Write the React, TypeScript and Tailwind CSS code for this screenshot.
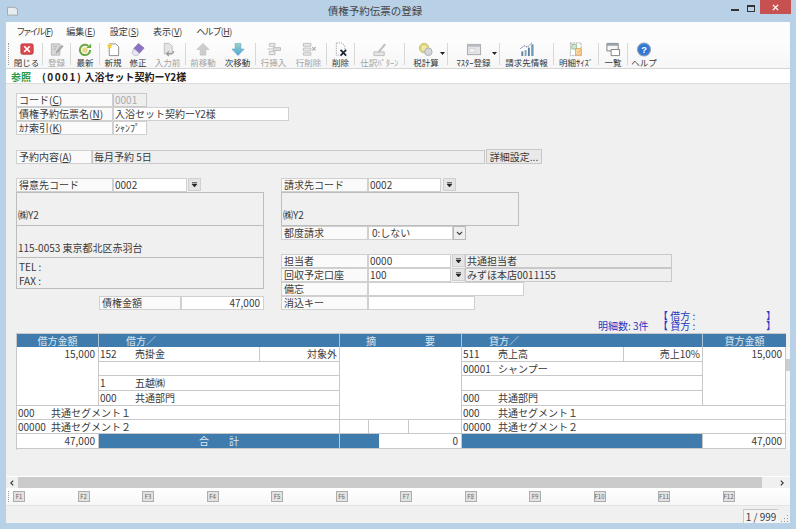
import type { ReactNode } from 'react';

const Svg = ({ children }: { children: ReactNode }) => (
  <svg viewBox="0 0 16 16" className="w-[16px] h-[15px] shrink-0">
    {children}
  </svg>
);

const icons: Record<string, ReactNode> = {
  close: (
    <Svg>
      <rect x="1.5" y="2" width="13" height="11" rx="1.5" fill="#e0484f" stroke="#b93a40" />
      <path d="M5 4.5l6 6M11 4.5l-6 6" stroke="#fff" strokeWidth="1.7" />
    </Svg>
  ),
  save: (
    <Svg>
      <path d="M2 2h9v12H2z" fill="#d8d8d8" stroke="#b5b5b5" />
      <path d="M7 10l6-7 2 1.500-6 7-2.500 1z" fill="#a9a9a9" />
      <path d="M4 5h4M4 7.500h3" stroke="#b0b0b0" />
    </Svg>
  ),
  refresh: (
    <Svg>
      <circle cx="8" cy="8.500" r="3" fill="#e8d98a" />
      <path d="M13.500 8.500a5.500 5.500 0 1 1-2-4.300" fill="none" stroke="#6fa843" strokeWidth="2.200" />
      <path d="M14.500 1.500v5h-5z" fill="#6fa843" />
    </Svg>
  ),
  newDoc: (
    <Svg>
      <path d="M4 2h7l3 3v9.500H4z" fill="#fff" stroke="#8a8a8a" />
      <path d="M4.500 0.500l1 2.300 2.400.3-1.800 1.600.5 2.400-2.100-1.200-2.100 1.200.5-2.400L1 3.100l2.400-.3z" fill="#f4cf3e" />
    </Svg>
  ),
  eraser: (
    <Svg>
      <path d="M8.500 1.500l6 5-5 5.500-6-5z" fill="#8a72c4" stroke="#6d589f" strokeWidth=".6" />
      <path d="M3.500 7l6 5-2 2.500H4L1.500 12z" fill="#e8e4f0" stroke="#a8a0bd" strokeWidth=".6" />
    </Svg>
  ),
  before: (
    <Svg>
      <path d="M4 1.500h5.500l3 3v8H4z" fill="#e4e4e4" stroke="#bdbdbd" />
      <path d="M14 9.500a3 3 0 0 1-3 3H7M9 10l-2.500 2.500L9 15" fill="none" stroke="#9c9c9c" strokeWidth="1.500" />
    </Svg>
  ),
  up: (
    <Svg>
      <path d="M8 1.500l6.500 6.500H11v6H5V8H1.500z" fill="#cdcdcd" stroke="#bbbbbb" strokeWidth=".6" />
    </Svg>
  ),
  down: (
    <Svg>
      <defs>
        <linearGradient id="dn" x1="0" y1="0" x2="0" y2="1">
          <stop offset="0" stopColor="#9bd3c4" />
          <stop offset="1" stopColor="#4aa3e0" />
        </linearGradient>
      </defs>
      <path d="M5 1.500h6v6h3.500L8 14.500 1.500 7.500H5z" fill="url(#dn)" stroke="#5f9fc0" strokeWidth=".6" />
    </Svg>
  ),
  rowIns: (
    <Svg>
      <path d="M3 1.500h6v3H3zM3 10h6v3.500H3z" fill="#ececec" stroke="#bcbcbc" />
      <path d="M7 6h8v3H7z" fill="#dedede" stroke="#bcbcbc" />
      <path d="M1 7.500h5" stroke="#bcbcbc" />
    </Svg>
  ),
  rowDel: (
    <Svg>
      <path d="M2 1.500h8v3H2zM2 6.500h8v3H2zM2 11.500h8v2.500H2z" fill="#ececec" stroke="#bcbcbc" />
      <path d="M11.500 5.500l3.500 3.500M15 5.500L11.500 9" stroke="#a8a8a8" strokeWidth="1.200" />
    </Svg>
  ),
  del: (
    <Svg>
      <path d="M3 1h6l3 3v6M3 1v13h3" fill="none" stroke="#a8a8a8" strokeDasharray="1.500 1" />
      <path d="M7.500 8.500l6 6M13.500 8.500l-6 6" stroke="#1a2030" strokeWidth="1.800" />
    </Svg>
  ),
  pattern: (
    <Svg>
      <path d="M1.500 10.500h11v4h-11z" fill="#e6e6e6" stroke="#bdbdbd" />
      <path d="M5 11l7.500-9.500 2 1.500L7 12z" fill="#c2c2c2" />
    </Svg>
  ),
  tax: (
    <Svg>
      <circle cx="6" cy="6.500" r="5" fill="#e3d884" stroke="#c2b65c" />
      <circle cx="6" cy="6.500" r="2.500" fill="#efe9b0" />
      <circle cx="10.500" cy="10.500" r="4" fill="#d5d7da" stroke="#a9adb2" />
    </Svg>
  ),
  master: (
    <Svg>
      <rect x="1" y="2.500" width="14" height="11" fill="#e2e4e8" stroke="#a5a8ad" />
      <path d="M1 2.500h14v2.500H1z" fill="#b7bac0" />
      <path d="M3 7h6v4H3z" fill="#f4f4f4" stroke="#c3c3c3" strokeWidth=".6" />
    </Svg>
  ),
  chart: (
    <Svg>
      <path d="M2 10h2v5H2z" fill="#5d7f9c" />
      <path d="M5.500 8.500h2V15h-2z" fill="#7da0bb" />
      <path d="M9 6h2v9H9z" fill="#5d7f9c" />
      <path d="M12.500 2.500h2.500V15h-2.500z" fill="#6d9ab8" />
      <path d="M1 7l4-3 3.500 1.500L13 1" fill="none" stroke="#4c6074" strokeDasharray="1.500 .8" />
    </Svg>
  ),
  size: (
    <Svg>
      <path d="M2 1h11.500v13.500H2z" fill="#fff" stroke="#a9a9a9" strokeDasharray="2 1" />
      <path d="M3.500 2.500h5v5h-5z" fill="#cfe6cf" stroke="#7aa77a" strokeWidth=".7" />
      <path d="M7.500 7h6v7h-6z" fill="#f6d9ad" stroke="#e59a3c" strokeWidth=".8" />
      <path d="M9.500 12l3-3" stroke="#e59a3c" />
    </Svg>
  ),
  list: (
    <Svg>
      <path d="M1.500 1.500h12v8h-12z" fill="#f6f6f6" stroke="#7d7d7d" />
      <path d="M1.500 1.500h12v2.500h-12z" fill="#9aa3ab" />
      <path d="M6 8h9v6.500H6z" fill="#fff" stroke="#7d7d7d" />
    </Svg>
  ),
  help: (
    <Svg>
      <circle cx="8" cy="8" r="7" fill="#3f7fd0" stroke="#8a9fb8" />
      <circle cx="8" cy="8" r="5.200" fill="#2f77d6" />
      <text x="8" y="11.500" textAnchor="middle" fontSize="10" fontWeight="700" fill="#fff" fontFamily="Liberation Sans, sans-serif">
        ?
      </text>
    </Svg>
  ),
};

type Tool = { key: string; label: string; w: string; off?: boolean; caret?: boolean; sep?: boolean };

const tools: Tool[] = [
  { key: 'close', label: '閉じる', w: 'w-[31px]', sep: true },
  { key: 'save', label: '登録', w: 'w-[27px]', off: true, sep: true },
  { key: 'refresh', label: '最新', w: 'w-[28px]', sep: true },
  { key: 'newDoc', label: '新規', w: 'w-[26px]' },
  { key: 'eraser', label: '修正', w: 'w-[24px]' },
  { key: 'before', label: '入力前', w: 'w-[35px]', off: true, sep: true },
  { key: 'up', label: '前移動', w: 'w-[34px]', off: true },
  { key: 'down', label: '次移動', w: 'w-[35px]', sep: true },
  { key: 'rowIns', label: '行挿入', w: 'w-[35px]', off: true },
  { key: 'rowDel', label: '行削除', w: 'w-[35px]', off: true, sep: true },
  { key: 'del', label: '削除', w: 'w-[27px]', sep: true },
  { key: 'pattern', label: '仕訳ﾊﾟﾀｰﾝ', w: 'w-[49px]', off: true, sep: true },
  { key: 'tax', label: '税計算', w: 'w-[42px]', caret: true, sep: true },
  { key: 'master', label: 'ﾏｽﾀｰ登録', w: 'w-[51px]', caret: true, sep: true },
  { key: 'chart', label: '請求先情報', w: 'w-[53px]', sep: true },
  { key: 'size', label: '明細ｻｲｽﾞ', w: 'w-[44px]', sep: true },
  { key: 'list', label: '一覧', w: 'w-[28px]', sep: true },
  { key: 'help', label: 'ヘルプ', w: 'w-[32px]' },
];

const menus = [
  { text: 'ファイル(', key: 'F', cls: 'tracking-[-1px]' },
  { text: '編集(', key: 'E', cls: '' },
  { text: '設定(', key: 'S', cls: '' },
  { text: '表示(', key: 'V', cls: '' },
  { text: 'ヘルプ(', key: 'H', cls: 'tracking-[-0.5px]' },
];

const fkeys = ['F1', 'F2', 'F3', 'F4', 'F5', 'F6', 'F7', 'F8', 'F9', 'F10', 'F11', 'F12'];

const labelBase =
  'h-[14px] shrink-0 bg-[#fafafa] border border-[#d0d0d0] pl-[2px] leading-[12px] whitespace-nowrap';
const valueBase = 'h-[14px] shrink-0 bg-white border border-[#d0d0d0] pl-[1px] leading-[12px] whitespace-nowrap';
const roBase = 'h-[14px] shrink-0 bg-[#efefef] border border-[#c8c8c8] pl-[1px] leading-[12px] whitespace-nowrap';

function Mn({ c }: { c: string }) {
  return (
    <>
      (<span className="underline">{c}</span>)
    </>
  );
}

function PickBtn() {
  return (
    <div className="w-[13px] h-[13px] shrink-0 bg-[#e4e4e4] border border-[#d0d0d0] flex items-center justify-center">
      <svg viewBox="0 0 7 6" className="w-[7px] h-[6px]">
        <path d="M1 0.500h5M1 2h5L3.500 5z" fill="#222" stroke="#222" strokeWidth=".6" />
      </svg>
    </div>
  );
}

// 明細グリッドのセル
const td = 'border-r border-b border-[#c8c8c8] bg-white leading-[13px] whitespace-nowrap overflow-hidden';

function Acct({ code, name, w = 'w-[35px]' }: { code?: string; name?: string; w?: string }) {
  return (
    <div className="flex pl-[1px]">
      <span className={`${w} shrink-0`}>{code}</span>
      <span>{name}</span>
    </div>
  );
}

export default function App() {
  return (
    <div className="w-[796px] h-[529px] overflow-hidden flex flex-col bg-[#b9d1e6] text-[10px] text-[#3a3a3a] font-['Noto_Sans_CJK_JP','Liberation_Sans',sans-serif]">
      {/* Title bar */}
      <div className="h-[22px] shrink-0 flex items-start pl-[7px]">
        <svg viewBox="0 0 12 10" className="w-[11px] h-[10px] mt-[6px] shrink-0">
          <path d="M0.500 1h8l3 2v6.500h-11z" fill="#e8ecf0" stroke="#9aa4ad" />
        </svg>
        <div className="flex-1 text-center text-[10.500px] text-[#444] leading-[22px] pl-[1px]">債権予約伝票の登録</div>
        <div className="w-[8px] h-[2px] bg-[#333] mt-[9px] mr-[8px] shrink-0" />
        <div className="w-[8px] h-[7px] border border-[#333] border-t-2 mt-[5px] mr-[5px] shrink-0" />
        <div className="w-[31px] h-[14px] bg-[#c75050] mr-[5px] shrink-0 flex items-center justify-center">
          <svg viewBox="0 0 8 8" className="w-[7px] h-[7px]">
            <path d="M1 1l6 6M7 1L1 7" stroke="#fff" strokeWidth="1.600" />
          </svg>
        </div>
      </div>

      <div className="mx-[6px] flex-1 flex flex-col bg-[#f0f0f0] min-h-0">
        {/* Menu */}
        <div className="h-[18px] shrink-0 bg-[#fcfcfc] flex items-center pl-[11px] gap-[14px] text-[9px] pt-[2px] [font-feature-settings:'palt']">
          {menus.map((m) => (
            <span key={m.key} className={m.cls}>
              {m.text}
              <span className="underline">{m.key}</span>)
            </span>
          ))}
        </div>

        {/* Toolbar */}
        <div className="h-[29px] shrink-0 bg-gradient-to-b from-[#fdfdfd] to-[#f6f6f6] border-b border-[#d6d6d6] flex items-center">
          <div className="w-[5px] h-[22px] ml-[2px] border-l border-dotted border-[#9a9a9a] mr-[-2px] shrink-0" />
          {tools.map((t) => (
            <div key={t.key} className="flex items-center shrink-0">
              <div className={`${t.w} relative flex flex-col items-center pt-[1px] ${t.off ? 'text-[#a2a2a2]' : 'text-[#333]'}`}>
                {icons[t.key]}
                <span className="text-[8.500px] leading-[11px] whitespace-nowrap">{t.label}</span>
                {t.caret && (
                  <svg viewBox="0 0 5 3" className="absolute right-[2px] top-[11px] w-[5px] h-[3px]">
                    <path d="M0 0h5L2.500 3z" fill="#222" />
                  </svg>
                )}
              </div>
              {t.sep && <div className="w-px h-[22px] bg-[#d8d8d8]" />}
            </div>
          ))}
        </div>

        {/* Tab row */}
        <div className="h-[15px] shrink-0 bg-white border-b border-[#dcdcdc] flex items-center font-bold">
          <span className="ml-[5px] w-[31px] text-[#2f9a4a]">参照</span>
          <span className="text-[#222]">
            <span className="tracking-[1.500px]">(0001)</span> 入浴セット契約ーY2様
          </span>
        </div>

        {/* Form */}
        <div className="flex-1 flex flex-col pt-[9px] pl-[10px] min-h-0">
          <div className="flex">
            <div className={`${labelBase} w-[97px]`}>
              コード<Mn c="C" />
            </div>
            <div className={`${roBase} w-[34px] text-[#aaa]`}>0001</div>
          </div>
          <div className="flex">
            <div className={`${labelBase} w-[97px]`}>
              債権予約伝票名<Mn c="N" />
            </div>
            <div className={`${valueBase} w-[176px]`}>入浴セット契約ーY2様</div>
          </div>
          <div className="flex">
            <div className={`${labelBase} w-[97px]`}>
              ｶﾅ索引<Mn c="K" />
            </div>
            <div className={`${valueBase} w-[34px]`}>ｼｬﾝﾌﾟ</div>
          </div>

          <div className="flex mt-[15px]">
            <div className={`${labelBase} w-[76px]`}>
              予約内容<Mn c="A" />
            </div>
            <div className={`${roBase} w-[393px]`}>毎月予約 5日</div>
            <div className="ml-[1px] -mt-[1px] w-[56px] h-[15px] bg-[#e9e9e9] border border-[#c8c8c8] text-center leading-[13px]">
              詳細設定...
            </div>
          </div>

          <div className="flex mt-[14px]">
            {/* 得意先 */}
            <div className="w-[248px] shrink-0 flex flex-col">
              <div className="flex">
                <div className={`${labelBase} w-[97px]`}>得意先コード</div>
                <div className={`${valueBase} w-[74px]`}>0002</div>
                <div className="ml-[1px]">
                  <PickBtn />
                </div>
              </div>
              <div className="h-[97px] border border-[#bdbdbd] flex flex-col">
                <div className="h-[34px] border-b border-[#bdbdbd] flex items-end pl-[1px] pb-[4px] leading-[12px]">㈱Y2</div>
                <div className="h-[32px] border-b border-[#bdbdbd] flex items-end pl-[1px] pb-[3px] leading-[12px]">
                  115-0053 東京都北区赤羽台
                </div>
                <div className="flex-1 pl-[2px] pt-[2px] leading-[14px]">
                  <div>TEL :</div>
                  <div>FAX :</div>
                </div>
              </div>
              <div className="flex mt-[7px] ml-[83px]">
                <div className={`${labelBase} w-[82px]`}>債権金額</div>
                <div className={`${valueBase} w-[83px] text-right pr-[3px]`}>47,000</div>
              </div>
            </div>

            {/* 請求先 */}
            <div className="ml-[17px] flex flex-col">
              <div className="flex">
                <div className={`${labelBase} w-[87px]`}>請求先コード</div>
                <div className={`${valueBase} w-[73px]`}>0002</div>
                <div className="ml-[2px]">
                  <PickBtn />
                </div>
              </div>
              <div className="h-[34px] w-[238px] border border-[#bdbdbd] flex items-end pl-[1px] pb-[4px] leading-[12px]">㈱Y2</div>
              <div className="flex">
                <div className={`${labelBase} w-[87px]`}>都度請求</div>
                <div className={`${valueBase} w-[85px] pl-[3px] flex`}>
                  <span className="flex-1">0:しない</span>
                </div>
                <div className="w-[13px] h-[14px] bg-[#eeeeee] border border-[#b8b8b8] flex items-center justify-center">
                  <svg viewBox="0 0 7 5" className="w-[7px] h-[5px]">
                    <path d="M1 1l2.500 2.500L6 1" fill="none" stroke="#444" strokeWidth="1.200" />
                  </svg>
                </div>
              </div>

              <div className="flex mt-[14px]">
                <div className={`${labelBase} w-[87px]`}>担当者</div>
                <div className={`${valueBase} w-[83px]`}>0000</div>
                <div className="ml-[1px]">
                  <PickBtn />
                </div>
                <div className={`${roBase} w-[207px] pl-[1px]`}>共通担当者</div>
              </div>
              <div className="flex">
                <div className={`${labelBase} w-[87px]`}>回収予定口座</div>
                <div className={`${valueBase} w-[83px]`}>100</div>
                <div className="ml-[1px]">
                  <PickBtn />
                </div>
                <div className={`${roBase} w-[207px] pl-[1px]`}>みずほ本店0011155</div>
              </div>
              <div className="flex">
                <div className={`${labelBase} w-[87px]`}>備忘</div>
                <div className={`${valueBase} w-[156px]`} />
              </div>
              <div className="flex">
                <div className={`${labelBase} w-[87px]`}>消込キー</div>
                <div className={`${valueBase} w-[107px]`} />
              </div>
            </div>
          </div>

          {/* 明細数 */}
          <div className="flex shrink-0 mt-[1px] text-[#2a35c0] leading-[10px] h-[20px]">
            <div className="ml-[582px] self-end whitespace-nowrap w-[60px]">明細数: 3件</div>
            <div className="w-[118px] flex flex-col">
              <div className="flex justify-between h-[10px]">
                <span>【 借方 :</span>
                <span>】</span>
              </div>
              <div className="flex justify-between h-[10px]">
                <span>【 貸方 :</span>
                <span>】</span>
              </div>
            </div>
          </div>

          {/* 明細 */}
          <div className="flex shrink-0 mt-[2px]">
            <div className="w-[770px] shrink-0 border-l border-t border-[#c8c8c8] grid grid-cols-[82px_241px_122px_241px_83px] grid-rows-[13px_15px_14px_15px_15px_14px_14px_15px]">
              <div className="bg-[#3f7cad] text-[#dbe7f1] text-center leading-[13px] border-r border-[#a9c4d9]">借方金額</div>
              <div className="bg-[#3f7cad] text-[#dbe7f1] pl-[27px] leading-[13px] border-r border-[#a9c4d9]">借方／</div>
              <div className="bg-[#3f7cad] text-[#dbe7f1] flex justify-between px-[26px] leading-[13px] border-r border-[#a9c4d9]">
                <span>摘</span>
                <span>要</span>
              </div>
              <div className="bg-[#3f7cad] text-[#dbe7f1] pl-[27px] leading-[13px] border-r border-[#a9c4d9]">貸方／</div>
              <div className="bg-[#3f7cad] text-[#dbe7f1] text-center leading-[13px]">貸方金額</div>

              {/* row 1 */}
              <div className={`${td} row-span-4 text-right pr-[3px]`}>15,000</div>
              <div className={`${td} flex`}>
                <div className="w-[161px] border-r border-[#c8c8c8]">
                  <Acct code="152" name="売掛金" />
                </div>
                <div className="flex-1 text-right pr-[2px]">対象外</div>
              </div>
              <div className={`${td} row-span-5`} />
              <div className={`${td} flex`}>
                <div className="w-[162px] border-r border-[#c8c8c8]">
                  <Acct code="511" name="売上高" />
                </div>
                <div className="flex-1 text-right pr-[2px]">売上10%</div>
              </div>
              <div className={`${td} row-span-4 text-right pr-[3px]`}>15,000</div>

              {/* row 2 */}
              <div className={td} />
              <div className={td}>
                <Acct code="00001" name="シャンプー" />
              </div>

              {/* row 3 */}
              <div className={td}>
                <Acct code="1" name="五越㈱" />
              </div>
              <div className={td} />

              {/* row 4 */}
              <div className={td}>
                <Acct code="000" name="共通部門" />
              </div>
              <div className={td}>
                <Acct code="000" name="共通部門" />
              </div>

              {/* row 5 */}
              <div className={`${td} col-span-2`}>
                <Acct code="000" name="共通セグメント１" w="w-[33px]" />
              </div>
              <div className={`${td} col-span-2`}>
                <Acct code="000" name="共通セグメント１" />
              </div>

              {/* row 6 */}
              <div className={`${td} col-span-2`}>
                <Acct code="00000" name="共通セグメント２" w="w-[33px]" />
              </div>
              <div className={`${td} flex`}>
                <div className="w-[29px] border-r border-[#c8c8c8]" />
                <div className="w-[40px] border-r border-[#c8c8c8]" />
              </div>
              <div className={`${td} col-span-2`}>
                <Acct code="00000" name="共通セグメント２" />
              </div>

              {/* totals */}
              <div className={`${td} text-right pr-[3px]`}>47,000</div>
              <div className="bg-[#3f7cad] text-[#dbe7f1] text-center leading-[14px] border-r border-b border-[#c8c8c8] tracking-[20px] pl-[20px]">合計</div>
              <div className={`${td} flex text-right`}>
                <div className="w-[39px] bg-[#3f7cad]" />
                <div className="flex-1 pr-[3px]">0</div>
              </div>
              <div className="bg-[#3f7cad] border-r border-b border-[#c8c8c8]" />
              <div className={`${td} text-right pr-[3px]`}>47,000</div>
            </div>

            {/* 縦スクロール */}
            <div className="w-[4px] mt-[14px] h-[103px] bg-[#f7f7f7] flex flex-col">
              <div className="h-[12px]" />
              <div className="h-[12px] bg-[#cdcdcd]" />
            </div>
          </div>
        </div>

        {/* Horizontal scrollbar */}
        <div className="h-[12px] shrink-0 border-t border-white flex items-stretch">
          <div className="w-[12px] flex items-center justify-center">
            <svg viewBox="0 0 5 7" className="w-[4px] h-[6px]">
              <path d="M4 0.500L1 3.500l3 3" fill="none" stroke="#333" strokeWidth="1.400" />
            </svg>
          </div>
          <div className="w-[744px] bg-[#cbcbcb]" />
          <div className="flex-1 flex items-center justify-end pr-[6px]">
            <svg viewBox="0 0 5 7" className="w-[4px] h-[6px]">
              <path d="M1 0.500l3 3-3 3" fill="none" stroke="#333" strokeWidth="1.400" />
            </svg>
          </div>
        </div>

        {/* Function keys */}
        <div className="h-[18px] shrink-0 bg-gradient-to-b from-white to-[#f7f7f7] border-b border-[#e4e4e4] flex items-center">
          <div className="w-[3px] h-[11px] ml-[2px] border-l border-dotted border-[#999] shrink-0" />
          <div className="ml-[2px] grid grid-cols-[repeat(12,64.5px)]">
            {fkeys.map((k) => (
              <div key={k}>
                <div className="w-[12px] h-[11px] bg-[#e2e2e2] border border-[#adadad] text-[6px] leading-[9px] text-center text-[#666] whitespace-nowrap">
                  {k}
                </div>
              </div>
            ))}
          </div>
        </div>

        {/* Status */}
        <div className="h-[17px] shrink-0 flex items-end justify-end">
          <div className="w-[35px] h-[14px] bg-[#f4f4f4] border-t border-l border-[#c8c8c8] text-center leading-[13px] text-[10px]">
            1 / 999
          </div>
          <div className="w-[12px] h-[14px] flex items-end justify-end pr-[1px] pb-[1px]">
            <svg viewBox="0 0 8 8" className="w-[8px] h-[8px]">
              <path d="M6.500 1v1M6.500 4v1M3.500 4v1M6.500 7v1M3.500 7v1M.5 7v1" stroke="#9a9a9a" />
            </svg>
          </div>
        </div>
      </div>
      <div className="h-[6px] shrink-0" />
    </div>
  );
}
